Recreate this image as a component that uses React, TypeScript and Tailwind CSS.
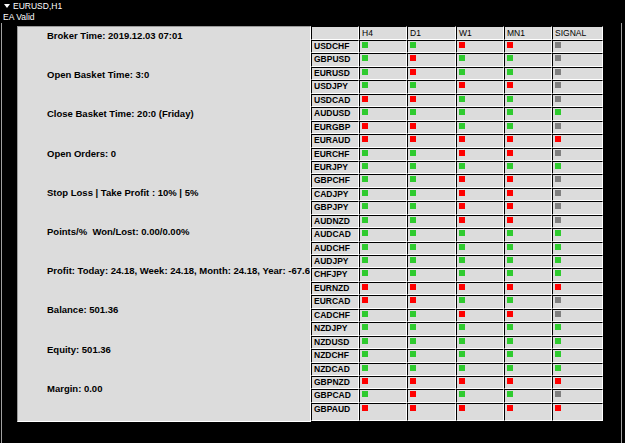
import React from 'react';

type Sig = 'g' | 'r' | 'x';

const rows: [string, string][] = [
  ['USDCHF', 'ggrrx'],
  ['GBPUSD', 'grggx'],
  ['EURUSD', 'grggx'],
  ['USDJPY', 'ggrrx'],
  ['USDCAD', 'rrggx'],
  ['AUDUSD', 'ggggg'],
  ['EURGBP', 'rrggx'],
  ['EURAUD', 'rrrrr'],
  ['EURCHF', 'ggrrx'],
  ['EURJPY', 'ggggg'],
  ['GBPCHF', 'ggrrx'],
  ['CADJPY', 'ggrrx'],
  ['GBPJPY', 'ggrrx'],
  ['AUDNZD', 'ggrrx'],
  ['AUDCAD', 'ggggg'],
  ['AUDCHF', 'ggggg'],
  ['AUDJPY', 'ggggg'],
  ['CHFJPY', 'ggggg'],
  ['EURNZD', 'rrrrr'],
  ['EURCAD', 'rrggx'],
  ['CADCHF', 'ggrrx'],
  ['NZDJPY', 'ggggg'],
  ['NZDUSD', 'ggggg'],
  ['NZDCHF', 'ggggg'],
  ['NZDCAD', 'ggggg'],
  ['GBPNZD', 'rrrrr'],
  ['GBPCAD', 'grggx'],
  ['GBPAUD', 'rrrrr'],
];

const infoLines = [
  'Broker Time: 2019.12.03 07:01',
  'Open Basket Time: 3:0',
  'Close Basket Time: 20:0 (Friday)',
  'Open Orders: 0',
  'Stop Loss | Take Profit : 10% | 5%',
  'Points/%  Won/Lost: 0.00/0.00%',
  'Profit: Today: 24.18, Week: 24.18, Month: 24.18, Year: -67.64',
  'Balance: 501.36',
  'Equity: 501.36',
  'Margin: 0.00',
];

const headers = ['H4', 'D1', 'W1', 'MN1', 'SIGNAL'];

const sigColor: Record<Sig, string> = {
  g: 'bg-[#2fcb2f]',
  r: 'bg-[#ff0000]',
  x: 'bg-[#808080]',
};

const cell =
  'bg-[#dcdcdc] border border-black border-r-white border-b-white overflow-hidden';

const App = () => {
  return (
    <div className="w-[625px] h-[443px] bg-black overflow-hidden font-['Liberation_Sans',Arial,sans-serif] text-black">
      {/* Chart title */}
      <div className="h-[23px] pl-[4px] pt-[1px] text-white text-[8.5px] leading-[10px]">
        <div className="flex items-center gap-[3px]">
          <svg width="6" height="5" viewBox="0 0 6 5">
            <polygon points="0,0 6,0 3,4" fill="#fff" />
          </svg>
          <span>EURUSD,H1</span>
        </div>
        <div className="-ml-[1px] mt-[1px]">EA Valid</div>
      </div>

      {/* Chart window */}
      <div className="ml-[1px] w-[621px] h-[420px] border-l border-r border-[#a0a0a0] pl-[15px] pt-[3px]">
        <div className="flex">
          {/* Info panel; the long profit line runs under the table */}
          <div className="w-[294px] h-[396px] bg-[#dcdcdc] border border-[#9a9a9a] border-r-white border-b-white overflow-hidden pl-[29px] pt-[3px]">
            {infoLines.map((t) => (
              <div
                key={t}
                className="h-[39.2px] text-[9.5px] leading-[12px] font-bold whitespace-pre"
              >
                {t}
              </div>
            ))}
          </div>

          {/* Signal table */}
          <div className="grid grid-cols-[48px_48px_49px_48px_48px_51px] grid-rows-[14px_repeat(27,13.45px)_18.5px]">
            <div className={cell} />
            {headers.map((h) => (
              <div key={h} className={`${cell} pl-[2px] pt-[1px] text-[8.5px] leading-[10px] font-medium`}>
                {h}
              </div>
            ))}
            {rows.map(([sym, sigs]) => (
              <React.Fragment key={sym}>
                <div className={`${cell} pl-[2px] text-[8.5px] leading-[10px] font-bold`}>
                  {sym}
                </div>
                {sigs.split('').map((s, i) => (
                  <div key={i} className={`${cell} pl-[2px] pt-[1px]`}>
                    <div className={`w-[6px] h-[6px] ${sigColor[s as Sig]}`} />
                  </div>
                ))}
              </React.Fragment>
            ))}
          </div>
        </div>
      </div>
    </div>
  );
};

export default App;
